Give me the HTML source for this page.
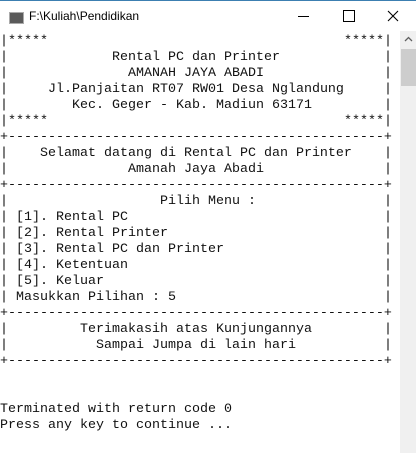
<html><head><style>
body{margin:0;width:416px;height:453px;background:#fff;position:relative;overflow:hidden;font-family:"Liberation Mono",monospace;}
.l{position:absolute;height:16px;line-height:16px;font-size:13.33px;color:#111;white-space:pre;}
#tb{position:absolute;left:0;top:0;width:416px;height:31px;background:#fff;border-top:1px solid #3c7fb1;box-sizing:border-box}
</style></head><body>
<div id="tb">
<div style="position:absolute;left:9px;top:11px;width:13px;height:10px;background:#5a5a5a;border:1px solid #aaa"></div>
<div style="position:absolute;left:29px;top:8px;font:12px 'Liberation Sans',sans-serif;color:#000">F:\Kuliah\Pendidikan</div>
<div style="position:absolute;left:298px;top:15px;width:11px;height:1px;background:#000"></div>
<div style="position:absolute;left:343px;top:9px;width:10px;height:10px;border:1px solid #000"></div>
<svg style="position:absolute;left:387px;top:9px" width="12" height="12"><path d="M1 1L11 11M11 1L1 11" stroke="#000" stroke-width="1.1"/></svg>
</div>
<div style="position:absolute;left:400px;top:31px;width:16px;height:422px;background:#f0f0f0"></div>
<div style="position:absolute;left:401px;top:49px;width:15px;height:37px;background:#cdcdcd"></div>
<svg style="position:absolute;left:404px;top:36px" width="9" height="6"><path d="M1 5L4.5 1.5L8 5" stroke="#606060" fill="none" stroke-width="1.3"/></svg>
<div id="c"></div>
<script>
var L=[
["|*****",0,"*****|",43],
["Rental PC dan Printer",14],
["AMANAH JAYA ABADI",16],
["Jl.Panjaitan RT07 RW01 Desa Nglandung",6],
["Kec. Geger - Kab. Madiun 63171",9],
["|*****",0,"*****|",43],
["D"],
["Selamat datang di Rental PC dan Printer",5],
["Amanah Jaya Abadi",16],
["D"],
["Pilih Menu :",20],
["[1]. Rental PC",2],
["[2]. Rental Printer",2],
["[3]. Rental PC dan Printer",2],
["[4]. Ketentuan",2],
["[5]. Keluar",2],
["Masukkan Pilihan : 5",2],
["D"],
["Terimakasih atas Kunjungannya",10],
["Sampai Jumpa di lain hari",12],
["D"],
null,null,
["T","Terminated with return code 0"],
["T","Press any key to continue ..."]];
var h="";
function s(t,c,y){return '<div class="l" style="left:'+(c*8)+'px;top:'+y+'px">'+t+'</div>';}
for(var i=0;i<L.length;i++){var y=34+i*16,r=L[i];if(!r)continue;
if(r[0]=="D"){h+=s("+"+"-".repeat(47)+"+",0,y);continue;}
if(r[0]=="T"){h+=s(r[1],0,y);continue;}
if(r.length==4){h+=s(r[0],0,y)+s(r[2],r[3],y);continue;}
h+=s("|",0,y)+s("|",48,y)+s(r[0],r[1],y);}
document.getElementById("c").innerHTML=h;
</script>
</body></html>
